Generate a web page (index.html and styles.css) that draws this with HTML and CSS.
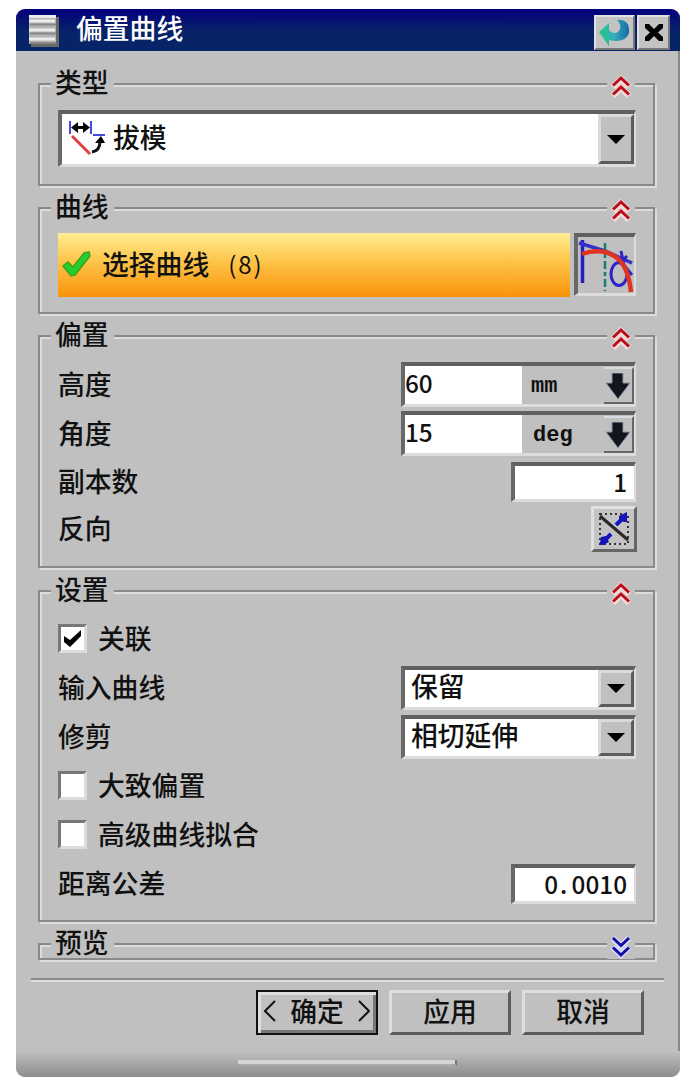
FILE: index.html
```html
<!DOCTYPE html>
<html lang="zh-CN">
<head>
    <meta charset="UTF-8">
    <meta name="viewport" content="width=device-width, initial-scale=1.0">
    <title>偏置曲线</title>
    <link rel="stylesheet" href="styles.css">
</head>
<body>
    <!-- shared icons -->
    <svg class="defs" width="0" height="0">
        <symbol id="chevrons" viewBox="0 0 20 24">
            <path d="M2 12 L10 4 L18 12 M2 21 L10 13 L18 21" fill="none" stroke="#f6dcd8" stroke-width="6"/>
            <path d="M2 10.500 L10 3 L18 10.500 M2 19.500 L10 12 L18 19.500" fill="none" stroke="#b80e1c" stroke-width="3"/>
        </symbol>
        <symbol id="chevrons-down" viewBox="0 0 20 24">
            <path d="M2 3 L10 11 L18 3 M2 12 L10 20 L18 12" fill="none" stroke="#dcdcf8" stroke-width="6"/>
            <path d="M2 3 L10 10.500 L18 3 M2 12.500 L10 20 L18 12.500" fill="none" stroke="#100ca8" stroke-width="3"/>
        </symbol>
        <symbol id="arrow" viewBox="0 0 26 28">
            <path d="M7 0 H18 V10 H25 L13 26 L1 10 H7 Z" fill="#12161c" stroke="#8a97a8" stroke-width="1"/>
        </symbol>
    </svg>

    <div class="dialog">
        <div class="titlebar">
            <svg class="menu-icon" width="30" height="32" viewBox="0 0 30 32">
                <rect x="2" y="2" width="28" height="30" fill="#686868"/>
                <rect width="27" height="29" fill="#b4b4b4"/>
                <path d="M0 1.500 H27 M0 6 H26 M0 15 H26 M0 24 H26" stroke="#ececec" stroke-width="3"/>
                <path d="M1 9.500 H27 M1 18.500 H27 M1 28 H27" stroke="#888" stroke-width="2"/>
            </svg>
            <span class="title">偏置曲线</span>
            <button class="tbtn reset">
                <svg width="34" height="30" viewBox="0 0 34 30">
                    <defs>
                        <linearGradient id="swirl">
                            <stop offset="0" stop-color="#20cc80"/>
                            <stop offset="0.500" stop-color="#35aebb"/>
                            <stop offset="1" stop-color="#1768aa"/>
                        </linearGradient>
                    </defs>
                    <path d="M1 14 L11 5 V12 C14 16 20 16 22 11 C23 7 21 4 19 2 C27 1 32 6 31 14 C30 21 22 25 11 22 V28 Z" fill="url(#swirl)"/>
                </svg>
            </button>
            <button class="tbtn close">
                <svg width="20" height="20" viewBox="0 0 20 20"><path d="M1 1 H5 L10 6 L15 1 H19 V5 L14 9.500 L19 14 V18 H15 L10 13 L5 18 H1 V14 L6 9.500 L1 5 Z" fill="#000"/></svg>
            </button>
        </div>

        <div class="group type">
            <span class="legend">类型</span>
            <span class="toggle"><svg width="20" height="24"><use href="#chevrons"/></svg></span>
            <div class="combo big">
                <svg class="draft-icon" width="38" height="36" viewBox="0 0 38 36">
                    <path d="M2 1 V14 M23 1 V14 M25 15 H37" stroke="#4848e0" stroke-width="2" fill="none"/>
                    <path d="M7 7.500 H18" stroke="#000" stroke-width="3"/>
                    <path d="M3 7.500 L10 2 V13 Z M22 7.500 L15 2 V13 Z" fill="#000"/>
                    <path d="M4 16 L22 34" stroke="#e04040" stroke-width="3"/>
                    <path d="M24 32 Q32 31 32 21" stroke="#111" stroke-width="3" fill="none"/>
                    <path d="M27 23 L33 16 L37 23 Z" fill="#000"/>
                </svg>
                <span class="value">拔模</span>
                <span class="drop"></span>
            </div>
        </div>

        <div class="group curve">
            <span class="legend">曲线</span>
            <span class="toggle"><svg width="20" height="24"><use href="#chevrons"/></svg></span>
            <div class="select-row">
                <div class="highlight">
                    <svg width="29" height="27" viewBox="0 0 29 27">
                        <path d="M1 15 L6 11 L11 16 L22 2 L27 1 L28 5 L13 24 L9 25 Z" fill="#20d030" stroke="#45a01c" stroke-width="1.500"/>
                    </svg>
                    <span>选择曲线</span><span class="count">(8)</span>
                </div>
                <div class="curve-btn">
                    <svg width="58" height="58" viewBox="0 0 58 58">
                        <path d="M4.500 3 V46" stroke="#2420c8" stroke-width="3.500"/>
                        <path d="M1 6 L27 14 L54 26" stroke="#3830c8" stroke-width="3.500" fill="none"/>
                        <path d="M27 6 V54" stroke="#168070" stroke-width="2.500" stroke-dasharray="8 3 4 3"/>
                        <ellipse cx="41" cy="37" rx="8" ry="11.500" stroke="#2c24c8" stroke-width="3" fill="none"/>
                        <path d="M43 14 L46 28 M49 19 L41 27 M44 26 L54 38" stroke="#2c24c8" stroke-width="3"/>
                        <path d="M4 17 Q15 13 27 15 Q38 18 44 26 Q51 36 53 55" stroke="#e03420" stroke-width="4.500" fill="none"/>
                    </svg>
                </div>
            </div>
        </div>

        <div class="group offset">
            <span class="legend">偏置</span>
            <span class="toggle"><svg width="20" height="24"><use href="#chevrons"/></svg></span>
            <div class="row">
                <label>高度</label>
                <div class="measure">
                    <span class="num">60</span><span class="unit mm">mm</span>
                    <span class="arrow-btn"><svg width="26" height="28"><use href="#arrow"/></svg></span>
                </div>
            </div>
            <div class="row">
                <label>角度</label>
                <div class="measure">
                    <span class="num">15</span><span class="unit">deg</span>
                    <span class="arrow-btn"><svg width="26" height="28"><use href="#arrow"/></svg></span>
                </div>
            </div>
            <div class="row short">
                <label>副本数</label>
                <div class="field">1</div>
            </div>
            <div class="row short">
                <label>反向</label>
                <button class="reverse">
                    <svg width="34" height="36" viewBox="0 0 34 36">
                        <path d="M3 3 H31 V33 H3 Z" fill="none" stroke="#333" stroke-width="2" stroke-dasharray="2 3"/>
                        <path d="M3 5 L31 29" stroke="#282828" stroke-width="3"/>
                        <path d="M19 14 L27 6 M4 33 L14 23" stroke="#1414c0" stroke-width="4"/>
                        <path d="M22 5 L30 1 V11 L27 11 L22 9 Z M4 26 L9 25 L12 31 L6 34 L3 34 Z" fill="#1414b8"/>
                    </svg>
                </button>
            </div>
        </div>

        <div class="group settings">
            <span class="legend">设置</span>
            <span class="toggle"><svg width="20" height="24"><use href="#chevrons"/></svg></span>
            <div class="row">
                <span class="check"><svg width="18" height="18" viewBox="0 0 18 18"><path d="M0 6 L6 10 L17 0 V6 L6 17 L0 12 Z" fill="#000"/></svg></span>
                <label>关联</label>
            </div>
            <div class="row">
                <label>输入曲线</label>
                <div class="combo"><span class="value">保留</span><span class="drop"></span></div>
            </div>
            <div class="row">
                <label>修剪</label>
                <div class="combo"><span class="value">相切延伸</span><span class="drop"></span></div>
            </div>
            <div class="row">
                <span class="check"></span>
                <label>大致偏置</label>
            </div>
            <div class="row">
                <span class="check"></span>
                <label>高级曲线拟合</label>
            </div>
            <div class="row">
                <label>距离公差</label>
                <div class="field">0<span class="dot">.</span>0010</div>
            </div>
        </div>

        <div class="group preview">
            <span class="legend">预览</span>
            <span class="toggle"><svg width="20" height="24"><use href="#chevrons-down"/></svg></span>
        </div>

        <div class="buttons">
            <button class="btn ok">
                <svg width="12" height="22"><path d="M11 1 L1 11 L11 21" fill="none" stroke="#111" stroke-width="2"/></svg>
                <span>确定</span>
                <svg width="12" height="22"><path d="M1 1 L11 11 L1 21" fill="none" stroke="#111" stroke-width="2"/></svg>
            </button>
            <button class="btn">应用</button>
            <button class="btn">取消</button>
        </div>
        <div class="bottom"><div class="grip"></div></div>
    </div>
</body>
</html>
```
FILE: styles.css
```css
* {
    box-sizing: border-box;
}
body {
    margin: 0;
    padding: 9px 0 0 16px;
    background-color: #fff;
    font-family: "Noto Sans CJK SC", sans-serif;
    font-size: 26.8px;
    font-weight: 500;
    line-height: 30px;
    color: #111;
}
svg {
    display: block;
    flex: none;
}
.defs {
    position: absolute;
}
button {
    font: inherit;
    color: inherit;
    padding: 0;
}
.dialog {
    display: flex;
    flex-direction: column;
    width: 664px;
    height: 1068px;
    background: linear-gradient(to left, #888 2px, #c0c0c0 2px);
    border-radius: 9px;
    overflow: hidden;
}
.titlebar {
    display: flex;
    align-items: flex-start;
    height: 42px;
    flex: none;
    padding: 6px 10px 0 13px;
    background: linear-gradient(#03007c, #082468 55%, #082468);
    color: #fff;
}
.title {
    flex: 1;
    margin: -6px 0 0 17px;
    line-height: 38px;
}
.tbtn {
    display: flex;
    align-items: center;
    justify-content: center;
    height: 35px;
    background-color: #c3c3c3;
    border: 2px solid;
    border-color: #e0e0e0 #777 #777 #e0e0e0;
}
.reset {
    width: 41px;
    margin-right: 2px;
}
.close {
    width: 33px;
}

/* group boxes */
.group {
    position: relative;
    flex: none;
    width: 617px;
    margin: 0 0 21px 22px;
    border: 2px solid #8a8a8a;
    box-shadow: 2px 2px 0 #dcdcdc, inset 2px 2px 0 #dcdcdc;
    padding: 0 17px 0 18px;
}
.legend {
    position: absolute;
    left: 11px;
    top: -18px;
    width: 63px;
    padding-left: 4px;
    background-color: #c0c0c0;
}
.toggle {
    position: absolute;
    right: 18px;
    top: -10px;
    width: 28px;
    height: 24px;
    padding-left: 4px;
    background-color: #c0c0c0;
}
.type {
    margin-top: 32px;
    height: 103px;
    padding-top: 25px;
}
.curve {
    height: 107px;
    padding-top: 24px;
}
.offset {
    height: 233px;
    padding-top: 23px;
    margin-bottom: 22px;
}
.settings {
    height: 332px;
    padding-top: 22px;
}
.preview {
    height: 17px;
    margin-bottom: 18px;
}
.row {
    display: flex;
    align-items: center;
    justify-content: space-between;
    height: 49px;
}
.short {
    height: 47px;
}
.row label {
    padding-bottom: 2px;
}
.check + label {
    flex: 1;
    margin-left: 11px;
}

/* fields */
.combo, .measure, .field, .curve-btn {
    border: 4px solid;
    border-color: #606060 #dcdcdc #dcdcdc #686868;
    border-right-width: 2px;
    border-bottom-width: 3px;
}
.combo {
    display: flex;
    align-items: center;
    width: 235px;
    height: 44px;
    background-color: #fff;
}
.combo .value {
    flex: 1;
    margin: -4px 0 0 6px;
}
.drop {
    display: flex;
    align-items: center;
    justify-content: center;
    width: 36px;
    height: 100%;
    background-color: #c0c0c0;
    border: 3px solid;
    border-color: #dadada #5c5c5c #5c5c5c #dadada;
}
.drop::before {
    content: "";
    border: 9px solid transparent;
    border-top-color: #000;
    border-bottom: 0;
}
.big {
    width: 578px;
    height: 57px;
}
.draft-icon {
    margin: 0 0 2px 6px;
}
.big .value {
    margin-left: 7px;
}
.select-row {
    display: flex;
    gap: 4px;
}
.highlight {
    display: flex;
    align-items: center;
    width: 512px;
    height: 64px;
    padding: 0 0 2px 4px;
    background: linear-gradient(#ffee94, #fdc448 45%, #fa920a);
}
.highlight span {
    margin-left: 11px;
}
.highlight .count {
    margin-left: 19px;
    font-size: 24px;
    font-weight: 400;
    letter-spacing: 2px;
}
.curve-btn {
    width: 62px;
    height: 63px;
    overflow: hidden;
}
.measure {
    display: flex;
    align-items: center;
    width: 235px;
    height: 45px;
    background-color: #c0c0c0;
}
.num, .field {
    font-size: 24.3px;
    background-color: #fff;
}
.num {
    width: 117px;
    height: 100%;
    line-height: 33px;
}
.unit {
    flex: 1;
    margin: 4px 0 0 11px;
    font-family: "Liberation Mono", monospace;
    font-weight: bold;
    font-size: 22px;
}
.mm {
    margin-left: 9px;
}
.arrow-btn {
    width: 30px;
    height: 37px;
    padding: 4px 0 0 1px;
    border: 2px solid;
    border-color: #d8dce0 #666 #666 #d0d0d0;
    border-left-width: 0;
}
.field {
    width: 125px;
    height: 40px;
    padding-right: 7px;
    line-height: 31px;
    text-align: right;
}
.dot {
    display: inline-block;
    width: 13.5px;
    text-align: left;
    padding-left: 2px;
}
.reverse {
    display: flex;
    align-items: center;
    justify-content: center;
    width: 46px;
    height: 46px;
    margin-right: -1px;
    background-color: #c3c3c3;
    border: 3px solid;
    border-color: #e0e0e0 #666 #666 #e0e0e0;
}
.check {
    width: 29px;
    height: 29px;
    margin-bottom: 1px;
    padding: 3px;
    background-color: #fff;
    border: 3px solid;
    border-color: #777 #dcdcdc #dcdcdc #777;
}

/* footer */
.buttons {
    display: flex;
    flex: none;
    gap: 11px;
    width: 633px;
    height: 56px;
    margin-left: 15px;
    padding: 10px 0 0 225px;
    border-top: 2px solid #8a8a8a;
    box-shadow: inset 0 2px 0 #dcdcdc;
}
.btn {
    display: flex;
    align-items: center;
    justify-content: center;
    flex: none;
    width: 122px;
    height: 45px;
    padding-bottom: 4px;
    background-color: #c0c0c0;
    border: 3px solid;
    border-color: #dedede #5c5c5c #5c5c5c #dedede;
}
.ok {
    gap: 14px;
    border: 2px solid #111;
    box-shadow: inset 3px 3px 0 #dedede, inset -3px -3px 0 #777;
}
.bottom {
    height: 26px;
    margin-top: auto;
    padding: 9px 0 0 222px;
    background: linear-gradient(#c0c0c0, #8c8c8c);
}
.grip {
    width: 219px;
    height: 6px;
    background-color: #d4d4d4;
    border-bottom: 2px solid #aaa;
    border-right: 2px solid #777;
}
```
